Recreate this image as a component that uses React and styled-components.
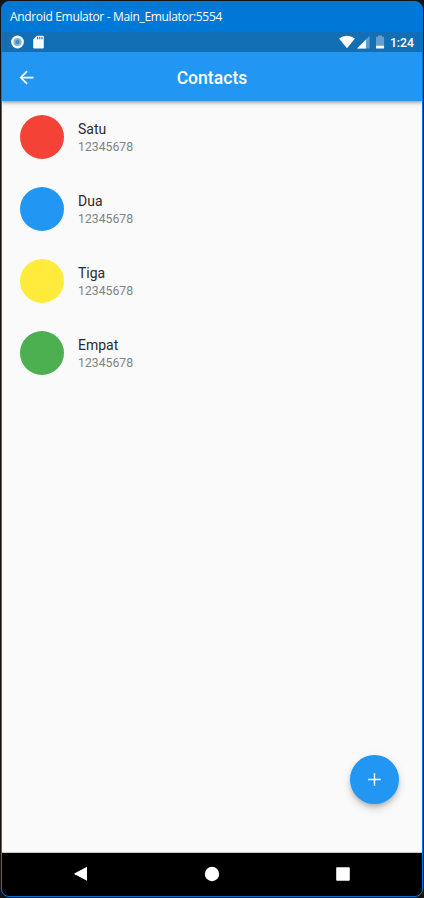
import React from 'react';
import styled, { createGlobalStyle } from 'styled-components';

const GlobalStyle = createGlobalStyle`
  * { box-sizing: border-box; }
  body { margin: 0; background: #141414; font-family: Roboto, sans-serif; }
`;

const Desktop = styled.div`
  height: 898px;
  padding: 1px;
  background: #141414;
`;

const Window = styled.main`
  display: flex;
  flex-direction: column;
  height: 896px;
  border: 1px solid #0078d7;
  border-radius: 8px;
  overflow: hidden;
  background: #0078d7;
`;

const TitleBar = styled.header`
  flex: 0 0 30px;
  padding-left: 8px;
  color: #fff;
  font: 12px/30px 'Open Sans', 'Noto Sans', sans-serif;
  letter-spacing: -0.33px;
  white-space: nowrap;
`;

const StatusBar = styled.div`
  flex: 0 0 20px;
  display: flex;
  align-items: center;
  justify-content: space-between;
  padding: 0 8px 0 9px;
  background: #136fb5;
`;

const StatusGroup = styled.div`
  display: flex;
  align-items: center;
  gap: ${({ $gap }) => $gap}px;
`;

const Clock = styled.span`
  padding-top: 1px;
  color: #fff;
  font-size: 12.25px;
  font-weight: 500;
  line-height: 18px;
`;

const AppBar = styled.nav`
  z-index: 1;
  flex: 0 0 49px;
  display: grid;
  grid-template-columns: 49px 1fr 49px;
  align-items: center;
  justify-items: center;
  background: #2196f3;
  box-shadow: 0 2px 2px rgba(0, 0, 0, 0.18), 0 3px 4px rgba(0, 0, 0, 0.14);
`;

const BackButton = styled.button`
  display: flex;
  padding: 1px 0 0;
  border: 0;
  background: none;
`;

const AppTitle = styled.h1`
  margin: 2px 0 0;
  color: #fff;
  font-size: 17.5px;
  font-weight: 500;
  line-height: 24px;
  letter-spacing: 0.05px;
`;

const Body = styled.section`
  flex: 1;
  display: flex;
  flex-direction: column;
  justify-content: space-between;
  background: #fafafa;
  border-bottom: 1px solid #c8c8c8;
`;

const ContactList = styled.ul`
  margin: 0;
  padding: 0.5px 0 0;
  list-style: none;
`;

const ContactRow = styled.li`
  display: flex;
  align-items: center;
  gap: 14px;
  height: 71.8px;
  padding-left: 18px;
`;

const Avatar = styled.span`
  width: 44px;
  height: 44px;
  border-radius: 50%;
  background: ${({ $color }) => $color};
`;

const ContactText = styled.div`
  display: flex;
  flex-direction: column;
  padding-top: 2px;
`;

const Name = styled.span`
  color: #2b2b2b;
  font-size: 14px;
  line-height: 18px;
`;

const Phone = styled.span`
  color: #838383;
  font-size: 12.25px;
  line-height: 18px;
`;

const AddButton = styled.button`
  align-self: flex-end;
  display: grid;
  place-items: center;
  width: 49px;
  height: 49px;
  margin: 0 23px 48.5px 0;
  padding: 0;
  border: 0;
  border-radius: 50%;
  background: #2196f3;
  box-shadow: 0 3px 4px -1px rgba(0, 0, 0, 0.2), 0 5px 8px rgba(0, 0, 0, 0.13),
    0 1px 12px rgba(0, 0, 0, 0.04);
`;

const NavigationBar = styled.footer`
  flex: 0 0 43px;
  display: grid;
  grid-template-columns: repeat(3, 131px);
  justify-content: center;
  align-items: center;
  justify-items: center;
  padding-bottom: 2px;
  background: #000;
`;

const Icon = styled.svg`
  display: block;
`;

const contacts = [
  { name: 'Satu', color: '#f44336' },
  { name: 'Dua', color: '#2196f3' },
  { name: 'Tiga', color: '#ffeb3b' },
  { name: 'Empat', color: '#4caf50' },
];

export default function App() {
  return (
    <Desktop>
      <GlobalStyle />
      <Window>
        <TitleBar>Android Emulator - Main_Emulator:5554</TitleBar>
        <StatusBar>
          <StatusGroup $gap={9}>
            <Icon width="13" height="14" viewBox="0 0 13 14">
              <circle cx="6.5" cy="7" r="6.4" fill="#f8fafc" />
              <circle cx="6.5" cy="7" r="4" fill="#7fb0d8" />
              <circle cx="6.5" cy="7" r="2" fill="#3f8bc5" />
            </Icon>
            <Icon width="11" height="14" viewBox="0 0 11 14">
              <path d="M4 .8h5.8q1 0 1 1v11q0 .8-.9.8H1.1q-.9 0-.9-.8V4.6z" fill="#fafafa" />
              <path d="M4.6 1.8v2.4M6.8 1.8v2.4M9 1.8v2.4" stroke="#136fb5" strokeWidth="1.1" />
            </Icon>
          </StatusGroup>
          <StatusGroup $gap={2}>
            <Icon width="16" height="14" viewBox="0 0 16 14">
              <path d="M0 3.5Q8-2 16 3.5L8 13.2z" fill="#fff" />
            </Icon>
            <Icon width="13" height="14" viewBox="0 0 13 14">
              <path d="M12.6.8v12.7H0z" fill="#5e9dcf" />
              <path d="M9 4.4v9.1H0z" fill="#fff" />
            </Icon>
            <Icon width="16" height="14" viewBox="0 0 16 14">
              <path d="M6 .5h4v1.2h1.5q.6 0 .6.6V11H4V2.3q0-.6.6-.6H6z" fill="#659fcd" />
              <path d="M4 10.7h8.1v2.2q0 .7-.7.7H4.7q-.7 0-.7-.7z" fill="#fff" />
            </Icon>
            <Clock>1:24</Clock>
          </StatusGroup>
        </StatusBar>
        <AppBar>
          <BackButton aria-label="Back">
            <Icon width="21" height="21" viewBox="0 0 24 24">
              <path d="M20 11H7.83l5.59-5.59L12 4l-8 8 8 8 1.41-1.41L7.83 13H20v-2z" fill="#fff" />
            </Icon>
          </BackButton>
          <AppTitle>Contacts</AppTitle>
        </AppBar>
        <Body>
          <ContactList>
            {contacts.map(({ name, color }) => (
              <ContactRow key={name}>
                <Avatar $color={color} />
                <ContactText>
                  <Name>{name}</Name>
                  <Phone>12345678</Phone>
                </ContactText>
              </ContactRow>
            ))}
          </ContactList>
          <AddButton aria-label="Add contact">
            <Icon width="21" height="21" viewBox="0 0 24 24">
              <path d="M19.2 12.8h-6.4v6.4h-1.6v-6.4H4.8v-1.6h6.4V4.8h1.6v6.4h6.4z" fill="#fff" />
            </Icon>
          </AddButton>
        </Body>
        <NavigationBar>
          <Icon width="14" height="16" viewBox="0 0 14 16">
            <path d="M13 .8v14L.7 8.3q-.8-.5 0-1z" fill="#fff" />
          </Icon>
          <Icon width="16" height="16" viewBox="0 0 16 16">
            <circle cx="8" cy="8" r="7.2" fill="#fff" />
          </Icon>
          <Icon width="14" height="14" viewBox="0 0 14 14">
            <rect x=".2" y=".2" width="13.6" height="13.6" rx=".8" fill="#fff" />
          </Icon>
        </NavigationBar>
      </Window>
    </Desktop>
  );
}
